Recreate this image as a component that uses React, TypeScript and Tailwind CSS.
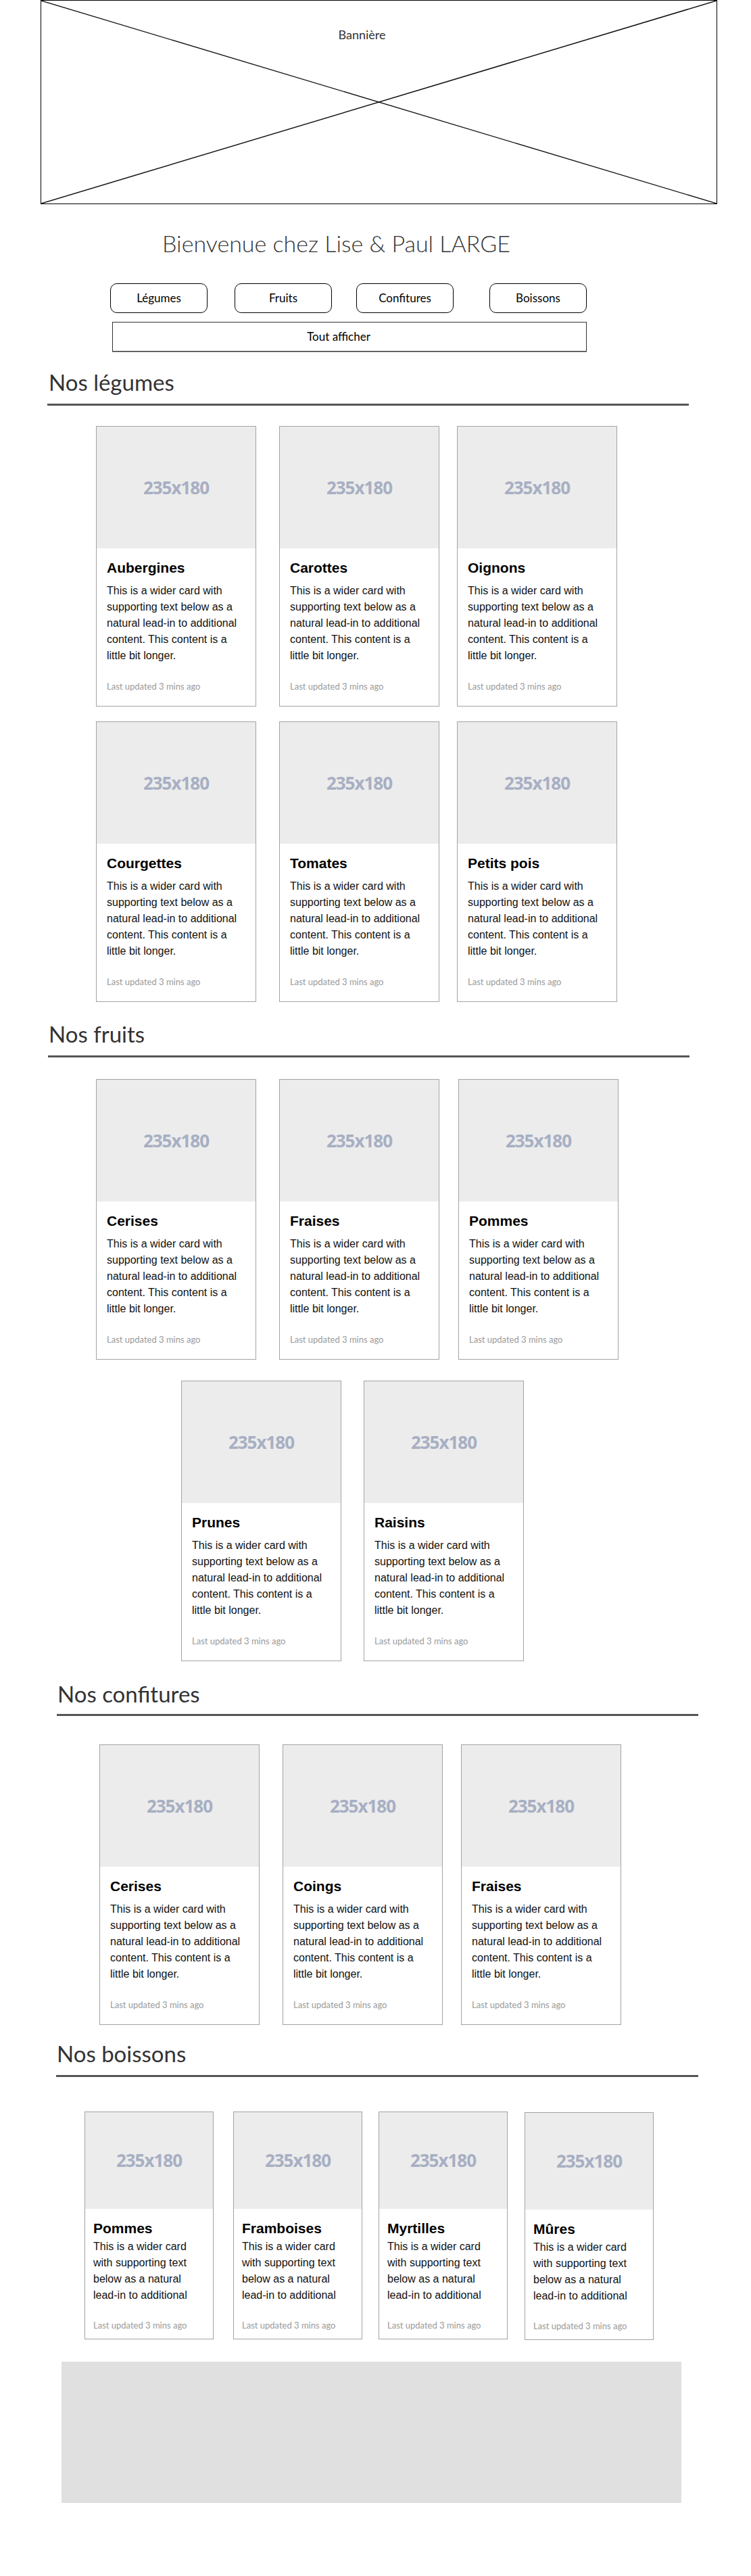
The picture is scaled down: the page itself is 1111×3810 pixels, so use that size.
// Maquette fil de fer de la page d'accueil "Lise & Paul LARGE".
// Banniere, titre, filtres par categorie, puis quatre sections de cartes.

type CardProps = {
  title: string;
  className?: string;
  small?: boolean;
};

const TEXT =
  'This is a wider card with supporting text below as a natural lead-in to additional content. This content is a little bit longer.';

// Les cartes "boissons" sont plus etroites : seules quatre lignes sont visibles.
const SHORT_TEXT =
  'This is a wider card with supporting text below as a natural lead-in to additional';

function Card({ title, className = '', small = false }: CardProps) {
  return (
    <div
      className={
        'flex shrink-0 flex-col border border-[#a3a3a3] bg-white ' +
        (small ? 'h-[337px] w-[191px] ' : 'h-[415px] w-[237px] ') +
        className
      }
    >
      {/* Image de remplacement 235x180 */}
      <div
        className={
          'flex w-full items-center justify-center bg-[#ececec] ' +
          (small ? 'h-[143px]' : 'h-[180px]')
        }
      >
        <span className="font-['Open_Sans',sans-serif] text-[26px] tracking-[-1px] font-bold text-[#a7afc3]">
          235x180
        </span>
      </div>

      <div className={small ? 'px-[12px] pt-[17px]' : 'px-[15px] pt-[17px]'}>
        <h5 className="font-['Liberation_Sans',Arial,sans-serif] text-[21px] leading-[24px] font-bold text-black">
          {title}
        </h5>
        <p
          className={
            "font-['Liberation_Sans',Arial,sans-serif] text-[16px] leading-[24px] text-[#111] " +
            (small ? 'mt-[3px] h-[96px]' : 'mt-[10px]')
          }
        >
          {small ? SHORT_TEXT : TEXT}
        </p>
        <p
          className={
            "font-['Lato',sans-serif] text-[13px] leading-[20px] text-[#9a9a9a] " +
            (small ? 'mt-[22px]' : 'mt-[23px]')
          }
        >
          Last updated 3 mins ago
        </p>
      </div>
    </div>
  );
}

function SectionTitle({ label, className = '' }: { label: string; className?: string }) {
  return (
    <h2
      className={
        "font-['Lato',sans-serif] text-[33px] leading-[40px] font-normal text-[#333] " + className
      }
    >
      {label}
    </h2>
  );
}

export default function App() {
  return (
    <div className="min-h-[3810px] w-full bg-white pb-[109px]">
      {/* Banniere */}
      <div className="relative ml-[60px] h-[302px] w-[1001px] border border-black">
        <svg
          className="absolute inset-0 h-full w-full"
          viewBox="0 0 100 100"
          preserveAspectRatio="none"
        >
          <line x1="0" y1="0" x2="100" y2="100" stroke="#111" strokeWidth="1.3" vectorEffect="non-scaling-stroke" />
          <line x1="0" y1="100" x2="100" y2="0" stroke="#111" strokeWidth="1.5" vectorEffect="non-scaling-stroke" />
        </svg>
        <div className="relative flex justify-center pr-[50px] pt-[38px]">
          <span className="font-['Lato',sans-serif] text-[18px] leading-[24px] text-[#333]">
            Bannière
          </span>
        </div>
      </div>

      {/* Titre */}
      <h1 className="mt-[38px] pl-[240px] font-['Lato',sans-serif] text-[34px] leading-[40px] font-light text-[#333]">
        Bienvenue chez Lise &amp; Paul LARGE
      </h1>

      {/* Filtres */}
      <div className="mt-[39px] ml-[163px] flex font-['Lato',sans-serif] text-[17px] text-black">
        <button className="h-[44px] w-[144px] rounded-[10px] border border-black bg-white">Légumes</button>
        <button className="ml-[40px] h-[44px] w-[144px] rounded-[10px] border border-black bg-white">Fruits</button>
        <button className="ml-[36px] h-[44px] w-[144px] rounded-[10px] border border-black bg-white">Confitures</button>
        <button className="ml-[53px] h-[44px] w-[144px] rounded-[10px] border border-black bg-white">Boissons</button>
      </div>
      <button className="mt-[13px] ml-[166px] flex h-[44px] w-[702px] items-center justify-center border border-[#333] bg-white pr-[32px] font-['Lato',sans-serif] text-[17px] text-black shadow-[0_1px_0_#999]">
        Tout afficher
      </button>

      {/* Nos legumes */}
      <SectionTitle label="Nos légumes" className="mt-[25px] pl-[72px]" />
      <div className="mt-[12px] ml-[70px] h-[3px] w-[949px] bg-[#555]" />
      <div className="mt-[30px] flex pl-[142px]">
        <Card title="Aubergines" />
        <Card title="Carottes" className="ml-[34px]" />
        <Card title="Oignons" className="ml-[26px]" />
      </div>
      <div className="mt-[22px] flex pl-[142px]">
        <Card title="Courgettes" />
        <Card title="Tomates" className="ml-[34px]" />
        <Card title="Petits pois" className="ml-[26px]" />
      </div>

      {/* Nos fruits */}
      <SectionTitle label="Nos fruits" className="mt-[27px] pl-[72px]" />
      <div className="mt-[12px] ml-[71px] h-[3px] w-[949px] bg-[#555]" />
      <div className="mt-[32px] flex pl-[142px]">
        <Card title="Cerises" />
        <Card title="Fraises" className="ml-[34px]" />
        <Card title="Pommes" className="ml-[28px]" />
      </div>
      <div className="mt-[31px] flex pl-[268px]">
        <Card title="Prunes" />
        <Card title="Raisins" className="ml-[33px]" />
      </div>

      {/* Nos confitures */}
      <SectionTitle label="Nos confitures" className="mt-[28px] pl-[85px]" />
      <div className="mt-[10px] ml-[84px] h-[3px] w-[949px] bg-[#555]" />
      <div className="mt-[42px] flex pl-[147px]">
        <Card title="Cerises" />
        <Card title="Coings" className="ml-[34px]" />
        <Card title="Fraises" className="ml-[27px]" />
      </div>

      {/* Nos boissons */}
      <SectionTitle label="Nos boissons" className="mt-[22px] pl-[84px]" />
      <div className="mt-[12px] ml-[83px] h-[3px] w-[950px] bg-[#555]" />
      <div className="mt-[51px] flex items-start pl-[125px]">
        <Card small title="Pommes" />
        <Card small title="Framboises" className="ml-[29px]" />
        <Card small title="Myrtilles" className="ml-[24px]" />
        <Card small title="Mûres" className="ml-[25px] mt-[1px]" />
      </div>

      {/* Pied de page */}
      <div className="mt-[32px] ml-[91px] h-[209px] w-[917px] bg-[#e0e0e0]" />
    </div>
  );
}
